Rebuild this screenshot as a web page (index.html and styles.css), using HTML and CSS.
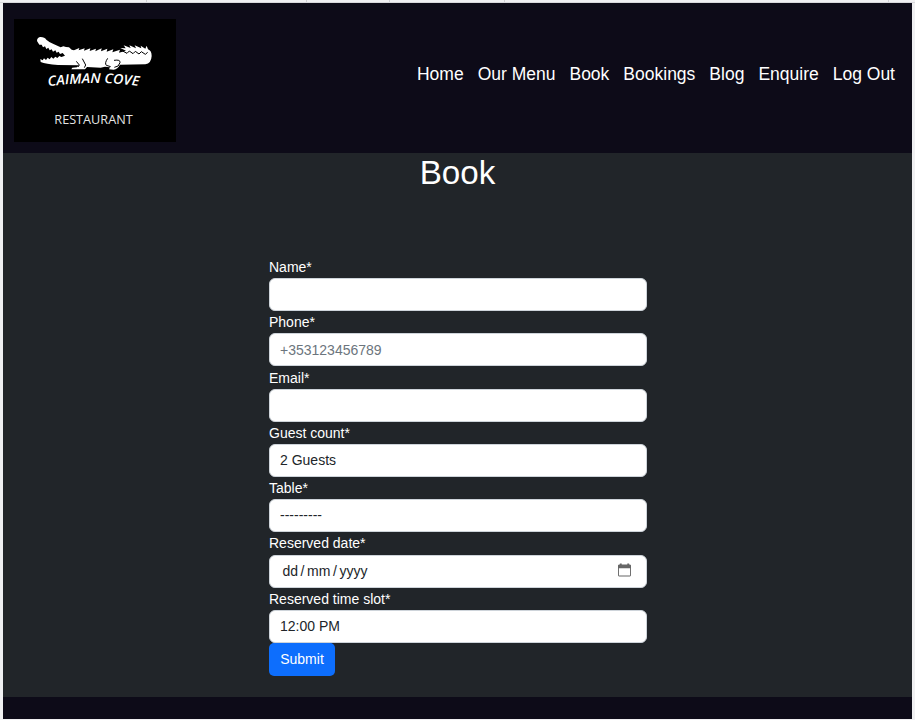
FILE: index.html
```html
<!DOCTYPE html>
<html lang="en">
<head>
<meta charset="utf-8">
<title>Caiman Cove - Book</title>
<link rel="stylesheet" href="styles.css">
</head>
<body>
<div class="tabs"><i></i><i></i><i></i><i></i><i></i></div>
<div class="page">
<header class="header">
<svg class="logo" viewBox="42 57 486 369" role="img" aria-label="Caiman Cove Restaurant">
<path class="black" d="M42 57h486v369H42z"/>
<path class="white" d="M111 123Q111 112 122 111Q134 111 139 119Q149 128 162 133L182 142L190 139L198 141L207 142L215 149L222 151L238 144L236 151L254 145L252 152L271 145L269 153L288 146L286 154L305 145L303 154L322 146L320 155L340 148L337 157L360 149L357 158L378 152L361 144L377 145L371 136L392 144L388 136L408 145L404 136L424 145L422 137L436 146L440 137L444 148Q455 152 455 168Q454 190 436 193L360 194Q353 207 341 209L327 208L330 202L315 200L302 203L261 201L255 208L214 208L217 203L231 202L237 196L174 195Q137 192 122 186L121 177L128 181L132 175L138 180L143 173L149 178L154 171L160 176L166 170L172 174L178 168L184 171L195 167L188 159L180 162L176 155L170 158L166 151L159 155L155 148L149 151L145 143L139 147L135 139L129 142L125 134L118 134Z"/>
<path class="line" d="M229 184L238 195L234 201M247 176L257 195L253 203M323 175Q313 190 319 196L332 200M342 181Q362 178 360 188Q357 201 343 202M366 152L381 160L388 153L399 161L406 154L417 162L424 155L436 163L443 157"/>
<path id="arc" fill="none" d="M145 259Q282 239 421 259"/>
<text class="brand"><textPath href="#arc" textLength="272" lengthAdjust="spacingAndGlyphs">CAIMAN COVE</textPath></text>
<text class="restaurant" x="163" y="373" textLength="235" lengthAdjust="spacingAndGlyphs">RESTAURANT</text>
</svg>
<nav class="nav"><a>Home</a><a>Our Menu</a><a>Book</a><a>Bookings</a><a>Blog</a><a>Enquire</a><a>Log Out</a></nav>
</header>
<main class="main">
<h1>Book</h1>
<form class="form">
<label for="name">Name*</label>
<input id="name" class="control" type="text">
<label for="phone">Phone*</label>
<input id="phone" class="control" type="tel" placeholder="+353123456789">
<label class="email-label" for="email">Email*</label>
<input id="email" class="control" type="email">
<label for="guests">Guest count*</label>
<select id="guests" class="control"><option>2 Guests</option></select>
<label for="table">Table*</label>
<select id="table" class="control"><option>---------</option></select>
<label>Reserved date*</label>
<div class="control date"><span>dd</span><span>/</span><span>mm</span><span>/</span><span>yyyy</span>
<svg class="calendar" viewBox="0 0 14 14"><path d="M2 1V0h2v1h6V0h2v1h1l1 1v11l-1 1H1l-1-1V2l1-1zM1 5v8h12V5z" fill-rule="evenodd"/></svg></div>
<label for="slot">Reserved time slot*</label>
<select id="slot" class="control"><option>12:00 PM</option></select>
<button class="submit" type="button">Submit</button>
</form>
</main>
<footer class="footer"></footer>
</div>
</body>
</html>
```
FILE: styles.css
```css
* { box-sizing: border-box; }
body {
  margin: 0;
  height: 720px;
  overflow: hidden;
  background: #f0f0f2;
  color: #fff;
  font: 14px/21px "Liberation Sans", Arial, sans-serif;
}
.tabs {
  height: 3px;
  display: grid;
  grid-template-columns: 147px 160px 83px 115px 384px;
  border-bottom: 1px solid #d8d8dc;
}
.tabs i { border-right: 1px solid #d0d0d4; }
.page {
  display: flex;
  flex-direction: column;
  width: 909px;
  height: 716px;
  margin-left: 3px;
}
.header {
  display: flex;
  justify-content: space-between;
  height: 150px;
  padding: 16px 17px 0 11px;
  background: #0d0b18;
}
.logo { width: 162px; height: 123px; }
.black { fill: #000; }
.white { fill: #fff; }
.line { fill: none; stroke: #000; stroke-width: 3; }
.brand {
  fill: #fff;
  font: italic 600 41px "Open Sans", sans-serif;
}
.restaurant {
  fill: #e4e4e4;
  font: 40px "Open Sans", sans-serif;
}
.nav {
  display: flex;
  gap: 14px;
  padding-top: 42px;
  font-size: 17.5px;
  line-height: 26px;
}
.main {
  flex: 1;
  background: #212529;
}
h1 {
  margin: 0;
  font-size: 33.2px;
  font-weight: 400;
  line-height: 40px;
  text-align: center;
}
.form {
  display: flex;
  flex-direction: column;
  width: 378px;
  margin: 62.7px 0 0 266px;
}
label {
  height: 22.33px;
  line-height: 23px;
}
.email-label { line-height: 25px; }
.control {
  appearance: none;
  display: block;
  width: 100%;
  height: 33px;
  padding: 5px 10px;
  border: 1px solid #ced4da;
  border-radius: 6px;
  background: #fff;
  color: #212529;
  font: inherit;
}
.control::placeholder { color: #6c757d; opacity: 1; }
.date {
  display: flex;
  align-items: center;
  gap: 2.6px;
  padding-left: 12.4px;
}
.calendar {
  width: 13px;
  height: 14px;
  margin: 0 5px 3px auto;
  fill: #666;
}
.submit {
  width: 66px;
  height: 33px;
  padding: 0;
  border: 0;
  border-radius: 5px;
  background: #0d6efd;
  color: #fff;
  font: inherit;
}
.footer {
  height: 22px;
  background: #0d0b18;
}
```
